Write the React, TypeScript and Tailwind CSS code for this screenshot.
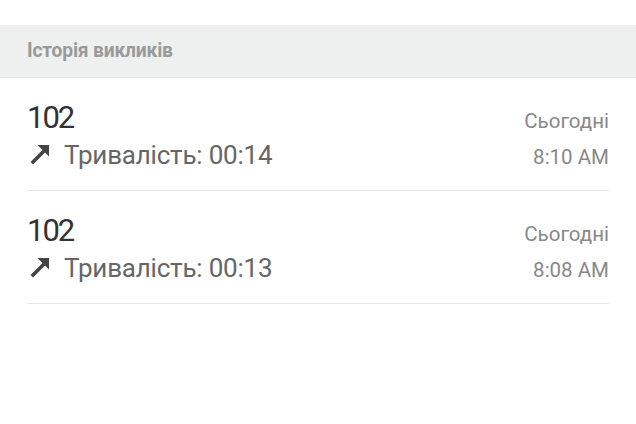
import React from 'react';

const calls = [
  { number: '102', duration: '00:14', day: 'Сьогодні', time: '8:10 AM' },
  { number: '102', duration: '00:13', day: 'Сьогодні', time: '8:08 AM' },
];

function OutgoingIcon() {
  return (
    <svg viewBox="0 0 20 20" className="h-[20px] w-[20px] shrink-0">
      <polygon points="19,0 7.5,0 19,11.5" fill="#444" />
      <line x1="1.8" y1="18.2" x2="14" y2="6" stroke="#444" strokeWidth="3.6" />
    </svg>
  );
}

export default function App() {
  return (
    <div className="h-[424px] w-[636px] bg-white pt-[25px] font-['Roboto',sans-serif]">
      {/* Section header */}
      <div className="flex h-[53px] items-center border-b border-[#e2e4e3] bg-[#eef0ef] px-[27px]">
        <span className="text-[19.3px] font-bold tracking-[-0.2px] text-[#9a9a9a]">Історія викликів</span>
      </div>

      {/* Call list */}
      <div className="px-[27px]">
        {calls.map((c, i) => (
          <div key={i} className="flex h-[113px] items-start justify-between border-b border-[#e6e6e6] pt-[23px]">
            <div className="flex flex-col">
              <span className="text-[31px] leading-[34px] tracking-[-2px] text-[#333]">{c.number}</span>
              <div className="mt-[5px] flex items-center gap-[14px] pl-[3px]">
                <OutgoingIcon />
                <span className="text-[26px] leading-[30px] tracking-[-0.2px] text-[#666]">
                  Тривалість: {c.duration}
                </span>
              </div>
            </div>
            <div className="flex flex-col items-end pt-[8px]">
              <span className="text-[20.5px] leading-[24px] text-[#888]">{c.day}</span>
              <span className="mt-[12px] text-[20.5px] leading-[24px] text-[#888]">{c.time}</span>
            </div>
          </div>
        ))}
      </div>
    </div>
  );
}
